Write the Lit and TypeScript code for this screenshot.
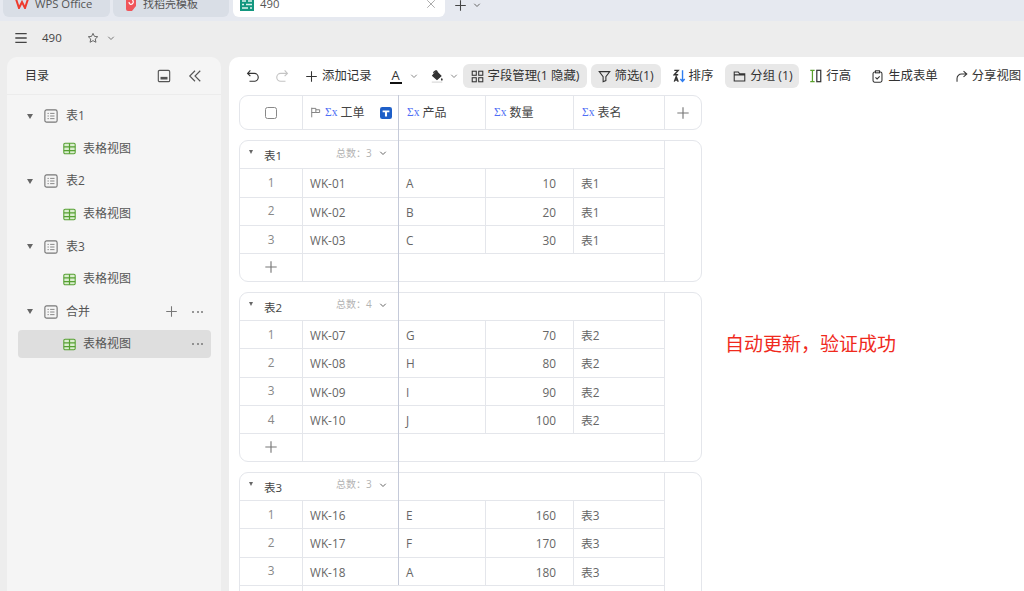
import { LitElement, html, css, svg } from "lit";
import { customElement } from "lit/decorators.js";

const groups = [
  {
    name: "表1",
    rows: [
      ["WK-01", "A", "10"],
      ["WK-02", "B", "20"],
      ["WK-03", "C", "30"],
    ],
  },
  {
    name: "表2",
    rows: [
      ["WK-07", "G", "70"],
      ["WK-08", "H", "80"],
      ["WK-09", "I", "90"],
      ["WK-10", "J", "100"],
    ],
  },
  {
    name: "表3",
    rows: [
      ["WK-16", "E", "160"],
      ["WK-17", "F", "170"],
      ["WK-18", "A", "180"],
    ],
  },
];

const icon = (size: number, body: unknown, box = 16) => html`<svg
  class="ico"
  width=${size}
  height=${size}
  viewBox="0 0 ${box} ${box}"
  fill="none"
  stroke="currentColor"
  stroke-width="1.3"
>
  ${body}
</svg>`;

const plus = (size = 14) => icon(size, svg`<path d="M8 1.5v13M1.5 8h13" />`);
const chevron = () => icon(8, svg`<path d="M2.5 5.5 8 11l5.5-5.5" stroke-width="2" />`);
const dots = () => html`<span class="dots"><i></i><i></i><i></i></span>`;
const sigma = () => html`<span class="sigma">Σx</span>`;
const caret = () => html`<span class="caret"></span>`;

const sheetIcon = () =>
  icon(
    14,
    svg`<rect x="1" y="1" width="14" height="14" rx="2" /><path d="M4 5h1.5M7 5h5M4 8h1.5M7 8h5M4 11h1.5M7 11h5" stroke-width="1" />`,
  );
const gridIcon = () =>
  html`<span class="green">${icon(
    13,
    svg`<rect x="1" y="1.5" width="14" height="13" rx="1.5" fill="#dbeed0" /><path d="M1 6h14M1 10.5h14M8 1.5v13" stroke-width="1.5" />`,
  )}</span>`;

@customElement("app-root")
export class AppRoot extends LitElement {
  private treeRow(name: string, extra = false) {
    return html`<div class="tree-row">
      ${caret()} ${sheetIcon()} <span class="tree-name">${name}</span>
      ${extra ? html`<span class="tree-tools">${plus(13)} ${dots()}</span>` : ""}
    </div>`;
  }

  private viewRow(active = false) {
    return html`<div class="view-wrap">
      <div class="view-row ${active ? "active" : ""}">
        ${gridIcon()} <span class="tree-name">表格视图</span>
        ${active ? html`<span class="view-dots">${dots()}</span>` : ""}
      </div>
    </div>`;
  }

  private renderGroup(g: (typeof groups)[number]) {
    return html`<section class="group">
      <div class="group-main">
        <div class="group-head">
          <span class="mini-caret"></span>
          <span class="group-name">${g.name}</span>
          <span class="group-count">总数：${g.rows.length}</span>
          <span class="group-chev">${chevron()}</span>
        </div>
        ${g.rows.map(
          (r, i) => html`<div class="row">
            <div class="cell idx">${i + 1}</div>
            <div class="cell">${r[0]}</div>
            <div class="cell">${r[1]}</div>
            <div class="cell num">${r[2]}</div>
            <div class="cell">${g.name}</div>
          </div>`,
        )}
        <div class="row add">
          <div class="cell idx">${plus(14)}</div>
          <div class="cell wide"></div>
        </div>
      </div>
      <div class="gutter"></div>
    </section>`;
  }

  render() {
    return html`
      <div class="tabs">
        <div class="tab">
          <svg class="logo" width="14" height="10" viewBox="0 0 14 10" fill="none" stroke="#ee3b2e" stroke-width="2">
            <path d="M1 0l3 9 3-6 3 6 3-9" />
          </svg>
          <span>WPS Office</span>
        </div>
        <div class="tab second">
          <svg class="logo" width="12" height="15" viewBox="0 0 12 15">
            <path d="M1 0h10v10l-4 5H3a2 2 0 0 1-2-2z" fill="#f0555a" />
            <path d="M6 2c2 2 3 3 2 5S4 9 4 6" fill="none" stroke="#fff" stroke-width="1.2" />
          </svg>
          <span>找稻壳模板</span>
        </div>
        <div class="tab current">
          <svg class="logo" width="14" height="14" viewBox="0 0 14 14">
            <rect width="14" height="14" fill="#13977f" />
            <path d="M2 4h4M8 4h4M2 7.5h2M6 7.5h6M2 11h6M10 11h2" stroke="#dff3ee" stroke-width="1.4" />
          </svg>
          <span>490</span>
          <span class="tab-x">
            ${icon(10, svg`<path d="M2 2l12 12M14 2 2 14" />`)}
          </span>
        </div>
        <span class="tab-plus">${plus(13)}</span>
        <span class="tab-chev">${chevron()}</span>
      </div>

      <div class="titlebar">
        ${icon(14, svg`<path d="M1.5 3h13M1.5 8h13M1.5 13h13" stroke-width="1.6" />`)}
        <span class="doc">490</span>
        <span class="star">
          ${icon(12, svg`<path d="M8 1.8l1.9 4 4.4.5-3.3 3 .9 4.4L8 11.5l-3.9 2.2.9-4.4-3.3-3 4.4-.5z" />`)}
        </span>
        <span class="title-chev">${chevron()}</span>
      </div>

      <div class="body">
        <aside class="side">
          <div class="side-head">
            <span class="side-title">目录</span>
            <span class="side-tool">
              ${icon(14, svg`<rect x="1.5" y="1.5" width="13" height="13" rx="1.5" /><rect x="4" y="9" width="8" height="3" fill="currentColor" stroke="none" />`)}
            </span>
            <span class="side-tool collapse">
              ${icon(14, svg`<path d="M8 2 2 8l6 6M14 2 8 8l6 6" />`)}
            </span>
          </div>
          <div class="tree">
            ${this.treeRow("表1")} ${this.viewRow()} ${this.treeRow("表2")} ${this.viewRow()}
            ${this.treeRow("表3")} ${this.viewRow()} ${this.treeRow("合并", true)} ${this.viewRow(true)}
          </div>
        </aside>

        <main class="main">
          <div class="toolbar">
            <span class="tool undo">
              ${icon(14, svg`<path d="M5 1.5 1.8 5 5 8.2M2 5h7.5a4.5 4.5 0 0 1 0 9H4" />`)}
            </span>
            <span class="tool redo">
              ${icon(14, svg`<path d="M11 1.5 14.2 5 11 8.2M14 5H6.5a4.5 4.5 0 0 0 0 9H12" />`)}
            </span>
            <span class="tool add-rec">${plus(13)}<b>添加记录</b></span>
            <span class="tool font-a">
              <span class="letter">A</span>
              <span class="t-chev">${chevron()}</span>
            </span>
            <span class="tool bucket">
              ${icon(14, svg`<path d="M7 2.5 12.5 8 8 12 3 7.5z" fill="#333" /><path d="M4 4.5C5 2 7 1.5 8.5 3" /><path d="M13.5 10c.8 1.2 1 1.7 1 2.2a1 1 0 0 1-2 0c0-.5.2-1 1-2.2z" fill="#333" stroke="none" /><path d="M2 15h12" stroke="#ddd" stroke-width="1.5" />`)}
              <span class="t-chev">${chevron()}</span>
            </span>
            <span class="tool pill fields">
              ${icon(13, svg`<rect x="1.5" y="1.5" width="5" height="5" /><rect x="9.5" y="1.5" width="5" height="5" /><rect x="1.5" y="9.5" width="5" height="5" /><rect x="9.5" y="9.5" width="5" height="5" />`)}
              <b>字段管理(1 隐藏)</b>
            </span>
            <span class="tool pill filter">
              ${icon(13, svg`<path d="M1.5 2h13L9.7 8.2V13l-3.4 1.5V8.2z" />`)}
              <b>筛选(1)</b>
            </span>
            <span class="tool sort">
              <svg class="ico" width="13" height="14" viewBox="0 0 15 16" fill="none" stroke-width="1.6">
                <path d="M1.5 1.5h4.5L1.5 6.5H6M1.5 14.5l2.2-6 2.3 6M2.3 12.6h2.8" stroke="#333" />
                <path d="M11 1.5v12.5M8.5 11.5l2.5 2.8 2.5-2.8" stroke="#2f7df0" />
              </svg>
              <b>排序</b>
            </span>
            <span class="tool pill group-by">
              ${icon(13, svg`<path d="M1.5 2.5h5l1.5 2h6.5v9h-13zM1.5 6h13" />`)}
              <b>分组 (1)</b>
            </span>
            <span class="tool height">
              <svg class="ico" width="13" height="14" viewBox="0 0 14 16" fill="none" stroke-width="1.4">
                <path d="M1 1.5h5M1 14.5h5M3.5 1.5v13" stroke="#5aa02c" />
                <rect x="8.5" y="1.5" width="4.5" height="13" stroke="#333" />
              </svg>
              <b>行高</b>
            </span>
            <span class="tool form">
              ${icon(13, svg`<rect x="2.5" y="2.5" width="11" height="12.5" rx="2" /><rect x="5.5" y="1" width="5" height="2.5" fill="#fff" /><path d="M5.5 9l2 2 3.2-3.2" />`)}
              <b>生成表单</b>
            </span>
            <span class="tool share">
              ${icon(13, svg`<path d="M10.5 1.5 14.5 5l-4 3.5M14 5H8a5.5 5.5 0 0 0-5.5 5.5V14.5" />`)}
              <b>分享视图</b>
            </span>
          </div>

          <div class="content">
            <div class="table">
              <div class="thead">
                <div class="th idx"><span class="check"></span></div>
                <div class="th">
                  <span class="flag">
                    ${icon(11, svg`<path d="M2.5 1v14M2.5 2h6v6h-6M8.5 4h5.5v4H8.5" />`)}
                  </span>
                  ${sigma()}<span>工单</span>
                  <span class="filter-badge">
                    ${icon(12, svg`<rect width="16" height="16" rx="3" fill="#1e5fc8" stroke="none" /><path d="M3.5 4.5h9v2.5H9.4v5.5H6.6V7H3.5z" fill="#fff" stroke="none" />`)}
                  </span>
                </div>
                <div class="th">${sigma()}<span>产品</span></div>
                <div class="th">${sigma()}<span>数量</span></div>
                <div class="th">${sigma()}<span>表名</span></div>
                <div class="th plus">${plus(14)}</div>
              </div>
              ${groups.map((g) => this.renderGroup(g))}
              <div class="freeze"></div>
            </div>
            <p class="note">自动更新，验证成功</p>
          </div>
        </main>
      </div>
    `;
  }

  static styles = css`
    :host {
      display: block;
      width: 1024px;
      height: 591px;
      overflow: hidden;
      background: #ededed;
      color: #444;
      font: 12px/16px "Open Sans", "Noto Sans CJK SC", sans-serif;
    }
    .ico {
      display: block;
      flex: none;
    }
    b {
      font-weight: 400;
    }

    .tabs {
      display: flex;
      align-items: flex-start;
      height: 21px;
      padding-left: 3px;
      background: #e6e9f0;
      overflow: hidden;
    }
    .tab {
      display: flex;
      align-items: center;
      gap: 6px;
      box-sizing: border-box;
      width: 107px;
      height: 27px;
      margin-top: -10px;
      padding-left: 12px;
      font-size: 11.3px;
      color: #555;
      background: #d9dee6;
      border-radius: 6px;
    }
    .second {
      width: 116px;
      margin-left: 3px;
      padding-left: 12px;
      font-size: 11px;
    }
    .current {
      width: 212px;
      margin-left: 4px;
      padding-left: 7px;
      background: #fff;
    }
    .tab-x {
      margin-left: auto;
      margin-right: 9px;
      color: #999;
    }
    .tab-plus {
      margin: -1px 0 0 9px;
      color: #444;
    }
    .tab-chev {
      margin: 1px 0 0 6px;
      color: #666;
    }

    .titlebar {
      display: flex;
      align-items: center;
      height: 34px;
      padding: 0 0 2px 14px;
      color: #444;
    }
    .doc {
      margin-left: 14px;
      font-size: 11.5px;
    }
    .star {
      margin-left: 25px;
      color: #666;
    }
    .title-chev {
      margin-left: 8px;
      color: #777;
    }

    .body {
      display: flex;
      height: 534px;
      padding-left: 7px;
    }
    .side {
      box-sizing: border-box;
      width: 214px;
      background: #f5f5f5;
      border-radius: 10px 10px 0 0;
    }
    .side-head {
      display: flex;
      align-items: center;
      height: 37px;
      padding: 0 19px 0 18px;
      border-bottom: 1px solid #ececec;
    }
    .side-title {
      flex: 1;
      color: #333;
    }
    .side-tool {
      color: #555;
    }
    .collapse {
      margin-left: 17px;
    }
    .tree {
      padding: 5px 10px 0 11px;
    }
    .tree-row,
    .view-wrap {
      display: flex;
      align-items: center;
      height: 32.6px;
    }
    .tree-row {
      padding-left: 9px;
      color: #777;
    }
    .caret {
      width: 0;
      height: 0;
      margin-right: 11px;
      border: 3.5px solid transparent;
      border-top: 5px solid #666;
      border-bottom: 0;
    }
    .tree-name {
      margin-left: 8px;
      color: #555;
    }
    .view-row .tree-name {
      margin-left: 7px;
    }
    .tree-tools {
      display: flex;
      align-items: center;
      gap: 14px;
      margin-left: auto;
      margin-right: 8px;
      color: #777;
    }
    .dots {
      display: flex;
      gap: 2.5px;
    }
    .dots i {
      width: 2px;
      height: 2px;
      background: #777;
      border-radius: 50%;
    }
    .view-row {
      display: flex;
      flex: 1;
      align-items: center;
      height: 28px;
      padding-left: 45px;
      border-radius: 4px;
    }
    .view-row.active {
      background: #dedede;
    }
    .view-dots {
      margin-left: auto;
      margin-right: 8px;
    }
    .green {
      color: #56a032;
    }

    .main {
      flex: 1;
      margin-left: 8px;
      background: #fff;
      border-radius: 10px 0 0 0;
    }
    .toolbar {
      display: flex;
      align-items: center;
      height: 38px;
      color: #333;
      font-size: 12.4px;
      white-space: nowrap;
    }
    .tool {
      display: flex;
      flex: none;
      align-items: center;
      gap: 4px;
    }
    .undo {
      margin-left: 17px;
    }
    .redo {
      margin-left: 15px;
      color: #c4c4c4;
    }
    .add-rec {
      margin-left: 16px;
    }
    .font-a {
      margin-left: 18px;
    }
    .letter {
      width: 12px;
      font-weight: 400;
      font-size: 13px;
      line-height: 13px;
      text-align: center;
      border-bottom: 2px solid #111;
    }
    .t-chev {
      margin-left: 4px;
      color: #888;
    }
    .bucket {
      margin-left: 12px;
    }
    .bucket .t-chev {
      margin-left: 2px;
    }
    .pill {
      box-sizing: border-box;
      height: 24px;
      padding-left: 8px;
      background: #e8e8e8;
      border-radius: 6px;
    }
    .fields {
      width: 124px;
      margin-left: 5px;
    }
    .filter {
      width: 70px;
      margin-left: 4px;
      padding-left: 7px;
    }
    .sort {
      gap: 3px;
      margin-left: 12px;
    }
    .group-by {
      width: 74px;
      margin-left: 12px;
    }
    .height {
      margin-left: 10px;
    }
    .form {
      margin-left: 20px;
    }
    .share {
      margin-left: 17px;
    }

    .content {
      display: flex;
      align-items: flex-start;
      padding-left: 10px;
    }
    .table {
      position: relative;
      flex: none;
      width: 463px;
    }
    .thead {
      display: grid;
      grid-template-columns: 63px 96px 87px 88px 91px 1fr;
      box-sizing: border-box;
      height: 35px;
      margin-bottom: 10px;
      border: 1px solid #e4e6eb;
      border-radius: 9px;
    }
    .th {
      display: flex;
      align-items: center;
      gap: 3px;
      padding-left: 8px;
      border-right: 1px solid #e4e6eb;
    }
    .th.idx {
      justify-content: center;
      padding-left: 0;
    }
    .th.plus {
      justify-content: center;
      padding-left: 0;
      border-right: 0;
      color: #777;
    }
    .check {
      width: 10px;
      height: 10px;
      border: 1px solid #888;
      border-radius: 2.5px;
    }
    .flag {
      margin: 0 1px 0 -1px;
      color: #777;
    }
    .sigma {
      color: #4f6ff5;
      font: 11.5px/1 "Liberation Serif", serif;
    }
    .filter-badge {
      margin-left: auto;
      margin-right: 6px;
    }

    .group {
      display: flex;
      box-sizing: border-box;
      margin-bottom: 10px;
      border: 1px solid #e4e6eb;
      border-radius: 9px;
      overflow: hidden;
    }
    .group-main {
      flex: none;
      width: 425px;
    }
    .gutter {
      flex: 1;
    }
    .group-head {
      display: flex;
      align-items: center;
      box-sizing: border-box;
      height: 28.33px;
      padding-left: 9px;
      border-right: 1px solid #e4e6eb;
      border-bottom: 1px solid #e4e6eb;
    }
    .mini-caret {
      width: 0;
      height: 0;
      margin-top: -5px;
      border: 2.5px solid transparent;
      border-top: 4px solid #666;
      border-bottom: 0;
    }
    .group-name {
      margin: 3px 0 0 11px;
      font-size: 11.5px;
      color: #444;
    }
    .group-count {
      margin: -4px 0 0 54px;
      font-size: 10px;
      color: #b3b3b3;
    }
    .group-chev {
      margin: -3px 0 0 7px;
      color: #666;
    }
    .row {
      display: grid;
      grid-template-columns: 63px 96px 87px 88px 91px;
      height: 28.33px;
    }
    .cell {
      display: flex;
      align-items: center;
      box-sizing: border-box;
      padding: 1px 0 0 7px;
      font-size: 11.8px;
      color: #666;
      border-right: 1px solid #e4e6eb;
      border-bottom: 1px solid #e4e6eb;
    }
    .cell.idx {
      justify-content: center;
      padding: 0 0 2px;
      color: #888;
    }
    .cell.num {
      justify-content: flex-end;
      padding: 1px 17px 0 0;
    }
    .add {
      height: 26.33px;
    }
    .add .cell {
      border-bottom: 0;
      color: #777;
    }
    .add .cell.idx {
      padding: 0;
    }
    .cell.wide {
      grid-column: 2 / 6;
    }
    .freeze {
      position: absolute;
      top: 0;
      left: 159px;
      width: 1px;
      height: 490px;
      background: #c5cad9;
    }
    .note {
      margin: 237px 0 0 23px;
      font-size: 19px;
      line-height: 24px;
      color: #f02a1d;
      white-space: nowrap;
    }
  `;
}

declare global {
  interface HTMLElementTagNameMap {
    "app-root": AppRoot;
  }
}
